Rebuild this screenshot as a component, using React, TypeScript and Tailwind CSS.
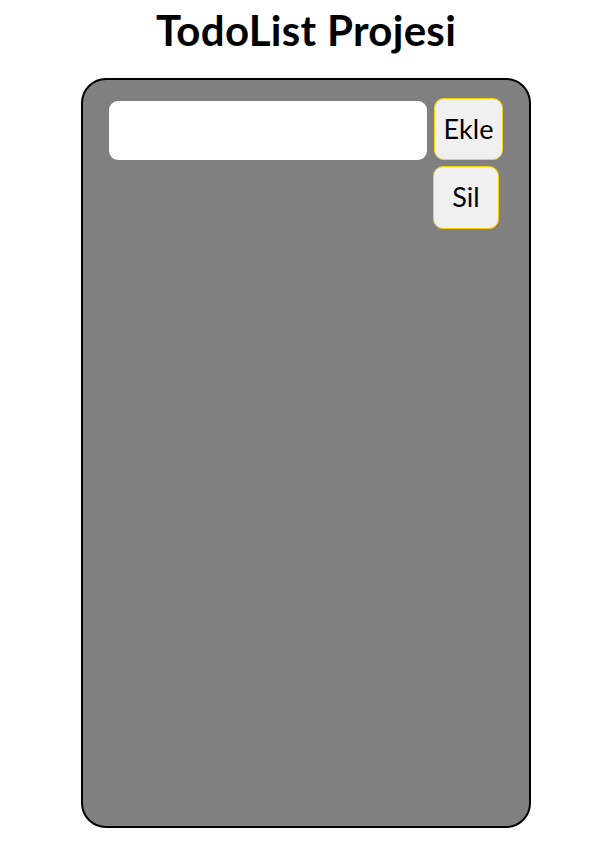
export default function App() {
  return (
    <div className="w-[607px] h-[852px] bg-white flex flex-col items-center pl-[5px] font-['Lato',sans-serif] text-black">
      <h1 className="mt-[6px] text-[42px] font-bold leading-[48px] tracking-[0.3px]">TodoList Projesi</h1>
      <div className="mt-[24px] w-[450px] h-[750px] bg-[#808080] border-2 border-black rounded-[25px] pt-[18px] pl-[26px]">
        <div className="flex items-start">
          <input
            type="text"
            className="mt-[3px] w-[318px] h-[59px] bg-white rounded-[9px] outline-none px-3"
          />
          <div className="ml-[7px] flex flex-col items-start gap-[6px]">
            <button className="w-[69px] h-[62px] bg-[#f0f0f0] border border-[#ffd000] rounded-[10px] text-[27px]">
              Ekle
            </button>
            <button className="-ml-px w-[66px] h-[63px] bg-[#f0f0f0] border border-[#ffd000] rounded-[10px] text-[27px]">
              Sil
            </button>
          </div>
        </div>
      </div>
    </div>
  );
}
